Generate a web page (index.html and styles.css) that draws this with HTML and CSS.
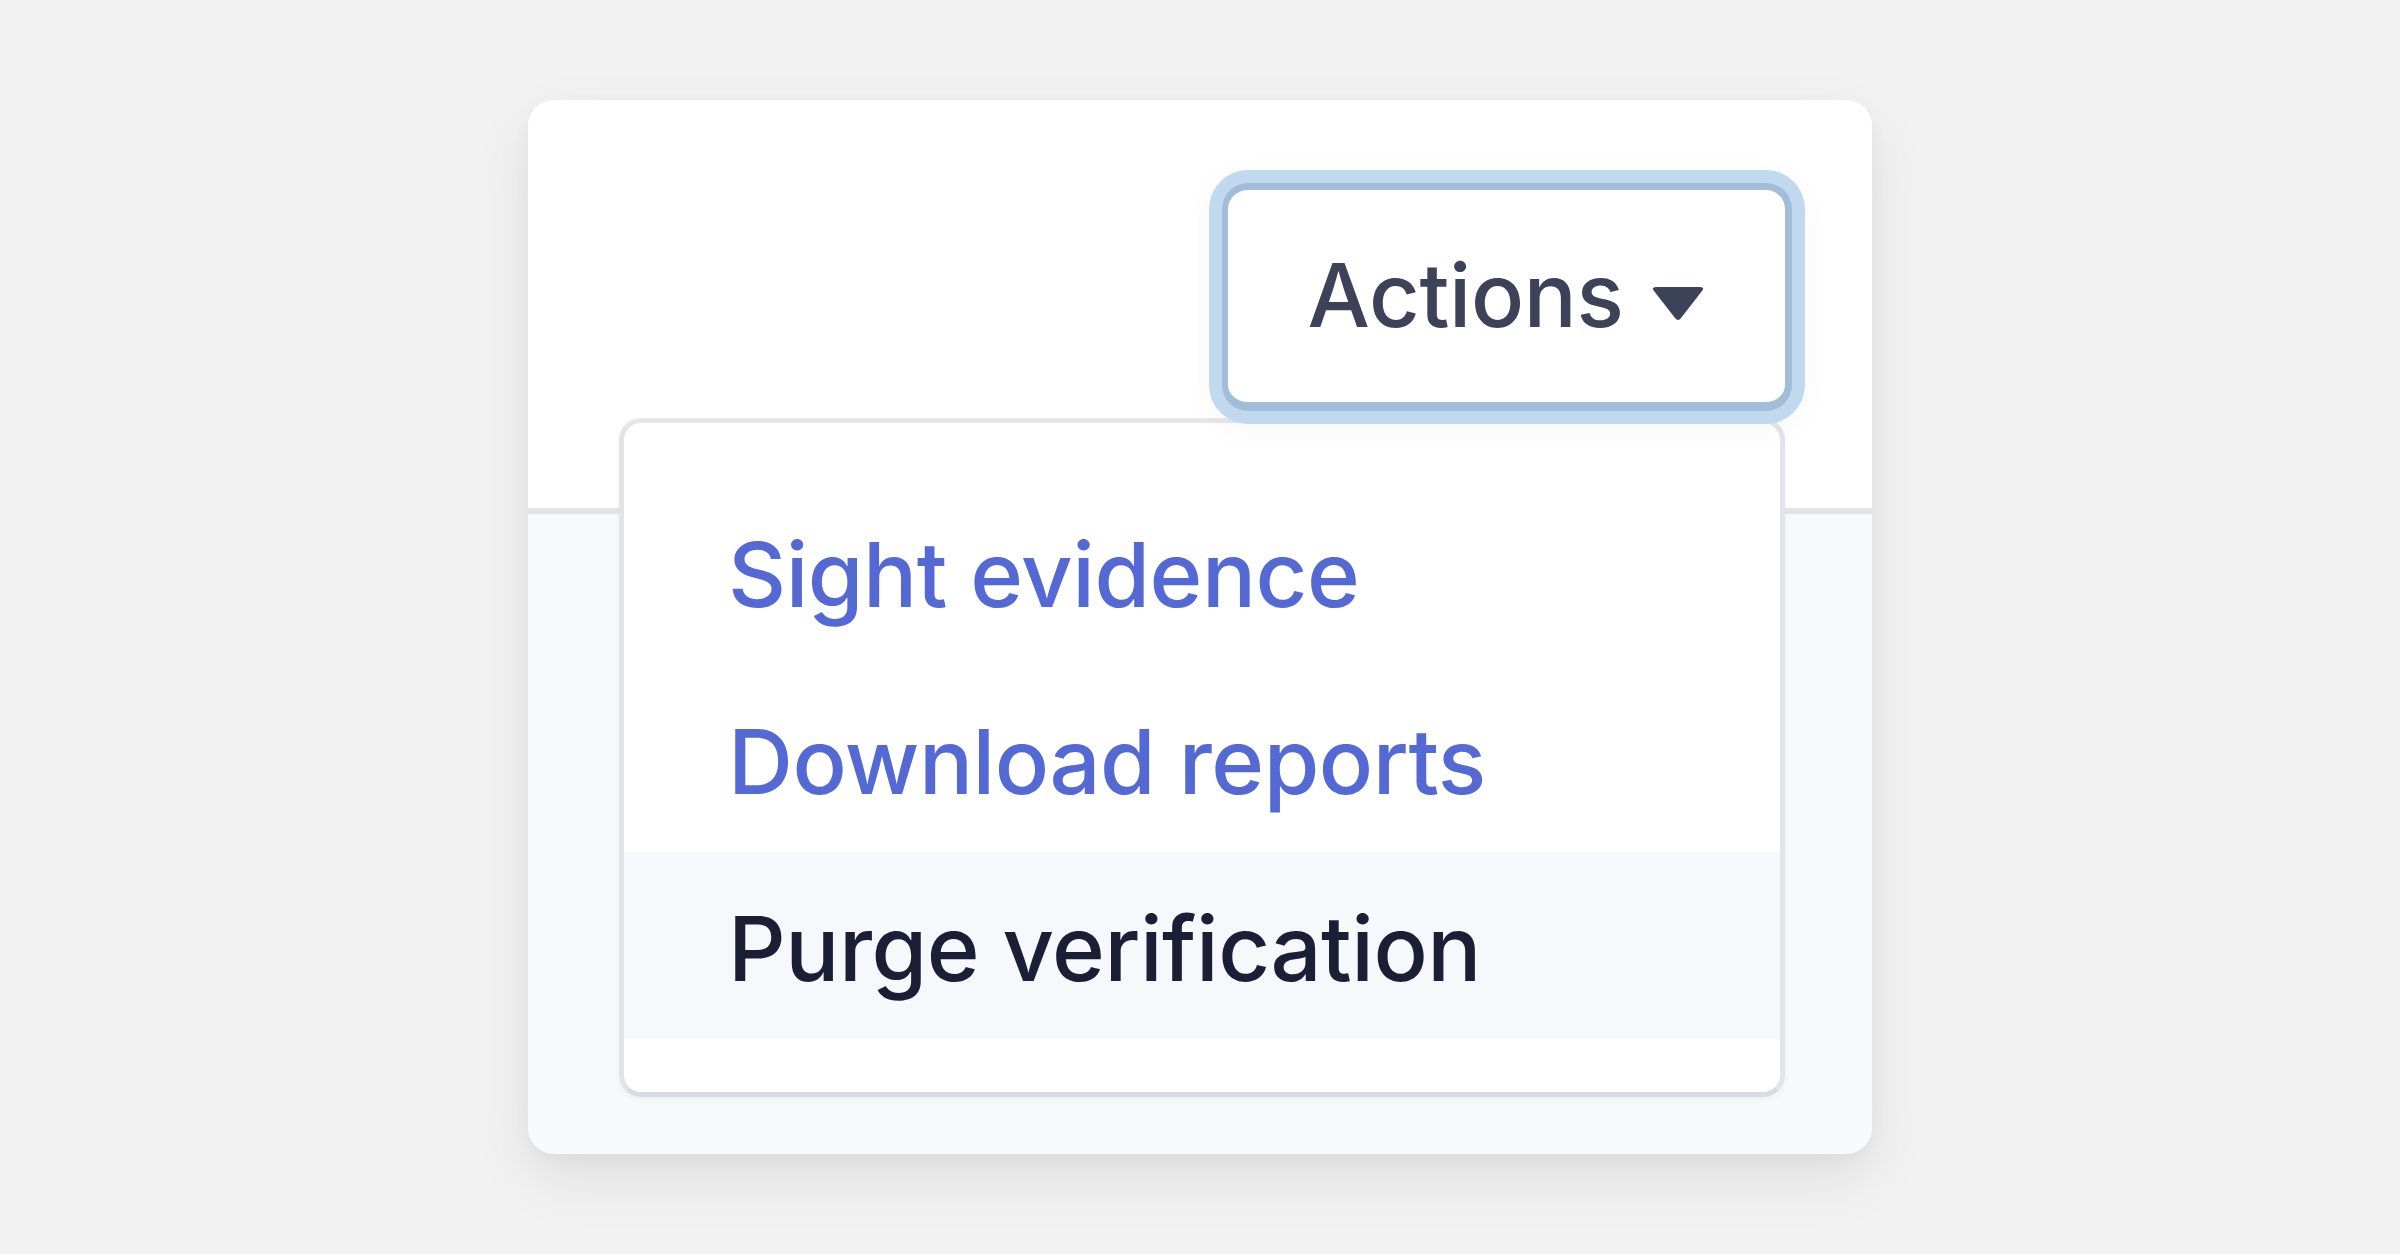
FILE: index.html
```html
<!DOCTYPE html>
<html lang="en">
<head>
<meta charset="utf-8">
<title>Actions menu</title>
<link rel="stylesheet" href="styles.css">
</head>
<body>
  <div class="card">
    <div class="card-header">
      <div class="dropdown">
        <button class="actions-btn" type="button">
          <span class="btn-label">Actions</span>
          <svg class="caret" width="56" height="36" viewBox="0 0 56 36" aria-hidden="true">
            <path d="M6 2 H50 Q55 2 52 6 L31 33 Q28 37 25 33 L4 6 Q1 2 6 2 Z" fill="#3c4257"/>
          </svg>
        </button>
        <ul class="menu">
          <li class="menu-item link">Sight evidence</li>
          <li class="menu-item link">Download reports</li>
          <li class="menu-item active">Purge verification</li>
        </ul>
      </div>
    </div>
    <div class="card-body"></div>
  </div>
</body>
</html>
```

FILE: styles.css
```css
* { box-sizing: border-box; }

html, body {
  margin: 0;
  padding: 0;
}

body {
  height: 100vh;
  background: #f2f2f2;
  display: flex;
  align-items: center;
  justify-content: center;
  font-family: Inter, "Noto Sans", "Liberation Sans", sans-serif;
}

.card {
  width: 1344px;
  height: 1054px;
  border-radius: 26px;
  background: #f7fafc;
  display: flex;
  flex-direction: column;
  box-shadow: 0 24px 60px rgba(0, 0, 0, 0.08), 0 6px 18px rgba(0, 0, 0, 0.04);
}

.card-header {
  height: 414px;
  flex: none;
  background: #ffffff;
  border-radius: 26px 26px 0 0;
  border-bottom: 6px solid #e3e3e3;
  display: flex;
  justify-content: flex-end;
  align-items: flex-start;
  padding: 83px 80px 0 0;
}

.card-body {
  flex: 1;
  border-radius: 0 0 26px 26px;
}

.dropdown {
  position: relative;
}

.actions-btn {
  position: relative;
  z-index: 2;
  width: 570px;
  height: 228px;
  display: flex;
  align-items: center;
  justify-content: center;
  gap: 26px;
  padding: 0;
  background: #ffffff;
  border-style: solid;
  border-color: #a2bdd7;
  border-width: 7px 7px 9px 6px;
  border-radius: 26px;
  box-shadow: 0 0 0 13px #c1d9ee, 0 6px 30px 14px rgba(0, 0, 0, 0.03);
  font-family: Inter, "Noto Sans", "Liberation Sans", sans-serif;
  font-size: 88px;
  font-weight: 500;
  letter-spacing: -0.3px;
  color: #3c4257;
  cursor: pointer;
}

.btn-label {
  line-height: 1;
  margin-top: -2px;
}

.caret {
  display: block;
  margin-top: 14px;
}

.menu {
  position: absolute;
  z-index: 1;
  top: calc(100% + 7px);
  right: 7px;
  width: 1166px;
  margin: 0;
  padding: 55px 0 53px;
  list-style: none;
  background: #ffffff;
  border: 5px solid #e2e4e7;
  border-top-color: #e6e6e6;
  border-bottom-color: #d8dce1;
  border-radius: 22px;
  box-shadow: 0 3px 6px rgba(0, 0, 0, 0.04);
}

.menu-item {
  height: 187px;
  display: flex;
  align-items: center;
  padding: 6px 0 0 104px;
  font-size: 90px;
  font-weight: 500;
  letter-spacing: -0.5px;
  line-height: 1;
}

.menu-item.link {
  color: #5469d4;
}

.menu-item.active {
  color: #1a1f36;
  background: #f6f9fc;
}
```
